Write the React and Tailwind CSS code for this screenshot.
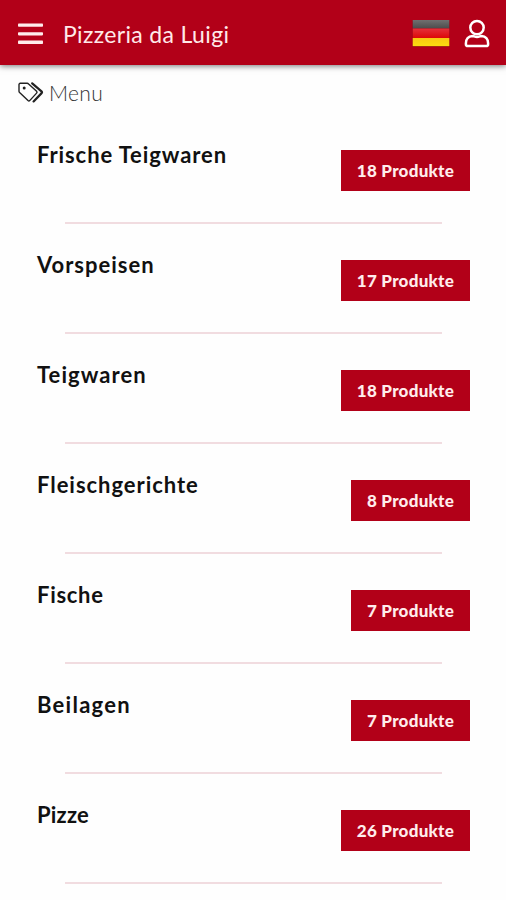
const categories = [
  { name: 'Frische Teigwaren', count: 18, tracking: 'tracking-[0.9px]' },
  { name: 'Vorspeisen', count: 17, tracking: 'tracking-[1px]' },
  { name: 'Teigwaren', count: 18, tracking: 'tracking-[1.05px]' },
  { name: 'Fleischgerichte', count: 8, tracking: 'tracking-[0.95px]' },
  { name: 'Fische', count: 7, tracking: 'tracking-[0.7px]' },
  { name: 'Beilagen', count: 7, tracking: 'tracking-[1.25px]' },
  { name: 'Pizze', count: 26, tracking: 'tracking-[0.2px]' }
];

function MenuIcon() {
  return (
    <svg className="w-[25px] h-[22px]" viewBox="0 0 25 22" fill="#ffecec">
      <rect y="0.4" width="25" height="3.4" rx="0.8" />
      <rect y="9.2" width="25" height="3.2" rx="0.8" />
      <rect y="17.6" width="25" height="3.4" rx="0.8" />
    </svg>
  );
}

function GermanFlag() {
  return (
    <svg className="w-[38px] h-[28px]" viewBox="0 0 38 28">
      <defs>
        <linearGradient id="flag-black" x1="0" y1="0" x2="0" y2="1">
          <stop offset="0" stopColor="#707070" />
          <stop offset="1" stopColor="#4c4c4c" />
        </linearGradient>
        <linearGradient id="flag-red" x1="0" y1="0" x2="0" y2="1">
          <stop offset="0" stopColor="#e5303a" />
          <stop offset="1" stopColor="#dc0808" />
        </linearGradient>
        <linearGradient id="flag-gold" x1="0" y1="0" x2="0" y2="1">
          <stop offset="0" stopColor="#f8c812" />
          <stop offset="1" stopColor="#fbdc10" />
        </linearGradient>
      </defs>
      <rect x="0.5" y="0.5" width="37" height="26.5" fill="#8c0012" />
      <rect x="0.7" y="0" width="36.6" height="8.5" fill="url(#flag-black)" />
      <rect x="0.7" y="8.5" width="36.6" height="9.5" fill="url(#flag-red)" />
      <rect x="0.7" y="18" width="36.6" height="8.2" fill="url(#flag-gold)" />
    </svg>
  );
}

function UserIcon() {
  return (
    <svg
      className="w-[26px] h-[30px]"
      viewBox="0 0 26 30"
      fill="none"
      stroke="#fff"
      strokeWidth="2.5"
      strokeLinejoin="round"
    >
      <circle cx="13" cy="8.6" r="6.7" />
      <path d="M8.5 16.9C4.4 17.1 1.9 20.2 1.9 24.3V25.2Q1.9 27.1 3.9 27.1H22.1Q24.1 27.1 24.1 25.2V24.3C24.1 20.2 21.6 17.1 17.5 16.9C16 16.9 15.2 18 13 18S10 16.9 8.5 16.9Z" />
    </svg>
  );
}

function TagsIcon() {
  return (
    <svg
      className="w-[26px] h-[21px]"
      viewBox="0 0 26 21"
      fill="none"
      stroke="#222"
      strokeWidth="1.4"
      strokeLinejoin="round"
      strokeLinecap="round"
    >
      <path d="M1 2.6Q1 1.3 2.3 1.3H9.2Q10 1.3 10.6 1.9L18.6 9.3Q19.5 10.2 18.6 11.1L11.7 18.6Q10.9 19.4 10 18.6L1.6 10.6Q1 10 1 9.2Z" />
      <path d="M14.2 1.3L23.5 9.3Q24.5 10.2 23.6 11.1L15.6 19.4" strokeWidth="2.2" />
      <circle cx="6.2" cy="5.9" r="1.5" fill="#222" stroke="none" />
    </svg>
  );
}

function Header() {
  return (
    <header className="flex h-[65px] items-center bg-[#b20018] pl-[18px] pr-4 pt-0.5 shadow-[0_1px_6px_rgba(0,0,0,0.55)]">
      <button aria-label="Menu">
        <MenuIcon />
      </button>
      <h1 className="ml-5 text-[23px] leading-7 tracking-[0.35px] text-[#ffe9e9]">
        Pizzeria da Luigi
      </h1>
      <div className="ml-auto flex items-center gap-[14px]">
        <GermanFlag />
        <UserIcon />
      </div>
    </header>
  );
}

function CategoryRow({ name, count, tracking }) {
  return (
    <li className="h-[110px]">
      <div className="flex h-[109px] items-start justify-between pl-[37px] pr-9">
        <h2 className={`mt-[28px] whitespace-nowrap text-[22px] font-bold leading-7 text-[#111] ${tracking}`}>
          {name}
        </h2>
        <span className="mt-[37px] flex h-[41px] items-center whitespace-nowrap bg-[#b20018] px-4 text-[17px] font-black tracking-[0.25px] text-[#ffecec]">
          {count} Produkte
        </span>
      </div>
      <div className="ml-[65px] mr-16 h-[2px] bg-[#f1dce0]" />
    </li>
  );
}

export default function App() {
  return (
    <div className="h-[900px] overflow-hidden bg-[#fefefe] font-['Lato',sans-serif]">
      <Header />
      <div className="flex h-12 items-center gap-[5px] pl-[18px] pt-[7px]">
        <TagsIcon />
        <span className="text-[21px] font-light leading-6 tracking-[0.3px] text-[#333]">Menu</span>
      </div>
      <ul>
        {categories.map((category) => (
          <CategoryRow key={category.name} {...category} />
        ))}
      </ul>
    </div>
  );
}
